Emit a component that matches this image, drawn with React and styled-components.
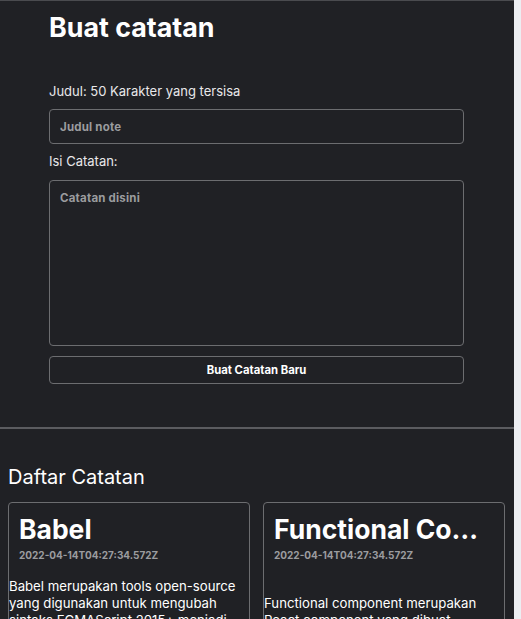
import React from 'react';
import styled, { createGlobalStyle } from 'styled-components';

const GlobalStyle = createGlobalStyle`
  body {
    margin: 0;
    background: #eceef2;
    font-family: Inter, "Noto Sans", sans-serif;
  }
`;

const Page = styled.div`
  width: 514px;
  min-height: 100vh;
  background: #202125;
  border-top: 1px solid #4a4b4f;
  color: #ffffff;
  overflow: hidden;
`;

const FormSection = styled.section`
  display: flex;
  flex-direction: column;
  padding: 0 50px 43px 49px;
`;

const Heading = styled.h1`
  margin: 10px 0 39px;
  font-size: 26.8px;
  line-height: 32px;
  font-weight: 700;
`;

const Label = styled.label`
  font-size: 13px;
  line-height: 18px;
  color: #e8e8ea;
  margin-bottom: 9px;
`;

const Input = styled.input`
  box-sizing: border-box;
  height: 35px;
  margin-bottom: 8px;
  padding: 0 10px;
  background: transparent;
  border: 1px solid #6c6d70;
  border-radius: 4px;
  color: #fff;
  font-family: inherit;
  font-size: 11.5px;
  font-weight: 700;
  letter-spacing: 0.2px;
  &::placeholder { color: #9b9c9f; }
`;

const TextArea = styled.textarea`
  box-sizing: border-box;
  height: 166px;
  margin-top: 1px;
  padding: 10px 10px;
  background: transparent;
  border: 1px solid #6c6d70;
  border-radius: 4px;
  color: #fff;
  font-family: inherit;
  font-size: 11.5px;
  font-weight: 700;
  letter-spacing: 0.2px;
  resize: none;
  &::placeholder { color: #9b9c9f; }
`;

const SubmitButton = styled.button`
  box-sizing: border-box;
  height: 28px;
  margin-top: 10px;
  background: transparent;
  border: 1px solid #6c6d70;
  border-radius: 4px;
  color: #fff;
  font-family: inherit;
  font-size: 11.3px;
  font-weight: 700;
`;

const Divider = styled.hr`
  margin: 0;
  border: none;
  border-top: 2px solid #5b5c60;
`;

const ListSection = styled.section`
  padding: 36px 9px 0 8px;
`;

const ListTitle = styled.h2`
  margin: 0 0 13px;
  font-size: 20px;
  line-height: 24px;
  font-weight: 400;
`;

const Grid = styled.div`
  display: grid;
  grid-template-columns: repeat(2, 1fr);
  column-gap: 13px;
`;

const Card = styled.article`
  min-width: 0;
  border: 1px solid #6c6d70;
  border-radius: 4px;
  padding-bottom: 12px;
`;

const CardHead = styled.div`
  padding: 9px 10px 0;
`;

const CardTitle = styled.h3`
  margin: 0;
  font-size: 26.5px;
  line-height: 34px;
  font-weight: 700;
  white-space: nowrap;
  overflow: hidden;
  text-overflow: ellipsis;
`;

const CardDate = styled.p`
  margin: 2px 0 0;
  font-size: 10px;
  line-height: 14px;
  font-weight: 700;
  color: #9b9c9f;
`;

const CardBody = styled.p`
  margin: 16px 0 0;
  font-size: 13.2px;
  line-height: 17px;
  white-space: pre-wrap;
`;

const notes = [
  {
    id: 1,
    title: 'Babel',
    createdAt: '2022-04-14T04:27:34.572Z',
    body: 'Babel merupakan tools open-source yang digunakan untuk mengubah sintaks ECMAScript 2015+ menjadi sintaks yang didukung oleh JavaScript engine versi lama.',
  },
  {
    id: 2,
    title: 'Functional Component',
    createdAt: '2022-04-14T04:27:34.572Z',
    body: '\nFunctional component merupakan React component yang dibuat menggunakan fungsi JavaScript.',
  },
];

export default function App() {
  return (
    <>
      <GlobalStyle />
      <Page>
        <FormSection>
          <Heading>Buat catatan</Heading>
          <Label>Judul: 50 Karakter yang tersisa</Label>
          <Input placeholder="Judul note" />
          <Label>Isi Catatan:</Label>
          <TextArea placeholder="Catatan disini" />
          <SubmitButton>Buat Catatan Baru</SubmitButton>
        </FormSection>
        <Divider />
        <ListSection>
          <ListTitle>Daftar Catatan</ListTitle>
          <Grid>
            {notes.map((note) => (
              <Card key={note.id}>
                <CardHead>
                  <CardTitle>{note.title}</CardTitle>
                  <CardDate>{note.createdAt}</CardDate>
                </CardHead>
                <CardBody>{note.body}</CardBody>
              </Card>
            ))}
          </Grid>
        </ListSection>
      </Page>
    </>
  );
}
